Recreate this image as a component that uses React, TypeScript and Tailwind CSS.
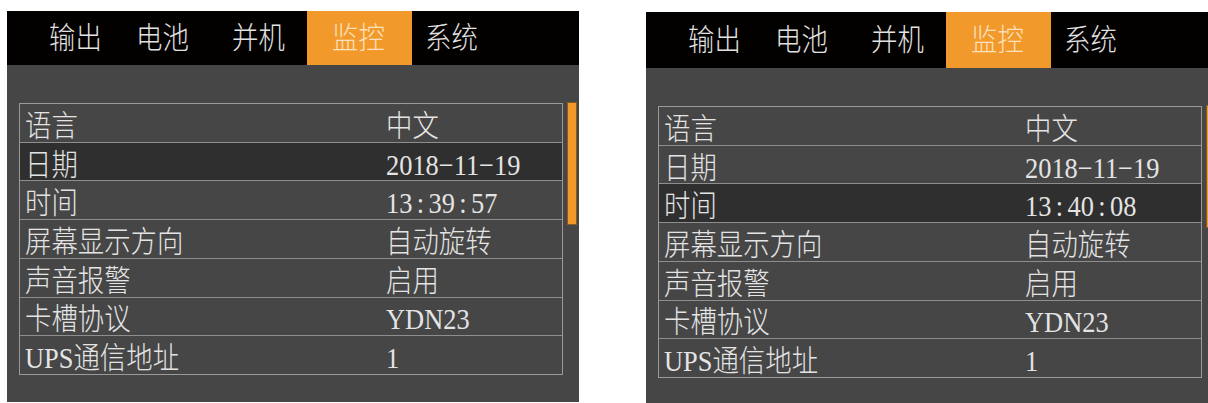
const tabs = [
  { label: '输出', cell: 'w-[87px] pl-[25px]' },
  { label: '电池', cell: 'w-[96px] pl-[25px]' },
  { label: '并机', cell: 'w-[100px] pl-[25px]' },
  { label: '监控', cell: 'w-[105px] pl-[25px]', active: true },
  { label: '系统', cell: 'w-[105px] pl-[13px]' },
];

type Row = { label: string; value: string };

// the device font is tall and narrow
function Txt({ children }: { children: React.ReactNode }) {
  return <span className="inline-block origin-left scale-x-[0.88] whitespace-nowrap">{children}</span>;
}

function Value({ v }: { v: string }) {
  if (/^\d+:\d+:\d+$/.test(v)) {
    const [h, m, s] = v.split(':');
    return (
      <Txt>
        {h}
        <span className="mx-[5px]">:</span>
        {m}
        <span className="mx-[5px]">:</span>
        {s}
      </Txt>
    );
  }
  return <Txt>{v.replace(/-/g, '−')}</Txt>;
}

function Panel({ rows, selected, shift }: { rows: Row[]; selected: number; shift?: boolean }) {
  return (
    <div className={`w-[572px] h-[391px] shrink-0 bg-[#464646] flex flex-col ${shift ? 'mt-[12px]' : 'mt-[11px]'}`}>
      {/* Tab bar */}
      <div className={`flex bg-[#030000] pl-[17px] ${shift ? 'h-[56px]' : 'h-[54px]'}`}>
        {tabs.map((t) => (
          <div
            key={t.label}
            className={`${t.cell} h-full flex items-center text-[30px] leading-none font-light ${
              t.active ? 'bg-[#f2992c] text-[#fbe0bd]' : 'text-[#e2e2e2]'
            }`}
          >
            <Txt>{t.label}</Txt>
          </div>
        ))}
      </div>

      {/* List + scrollbar */}
      <div className="flex items-start pl-[12px] pt-[38px]">
        <div className="w-[544px] h-[272px] border border-[#9a9a9a] flex flex-col">
          {rows.map((r, i) => (
            <div
              key={r.label}
              className={`flex-1 min-h-0 flex items-center pt-[6px] text-[30px] leading-[20px] font-light text-[#e4e4e4] ${
                i > 0 ? 'border-t border-[#8e8e8e]' : ''
              } ${i === selected ? 'bg-[#2f2f2f]' : ''}`}
            >
              <div className="w-[366px] pl-[5px]">
                <Txt>{r.label}</Txt>
              </div>
              <div>
                <Value v={r.value} />
              </div>
            </div>
          ))}
        </div>
        <div className="ml-[4px] -mt-[1px] w-[10px] h-[123px] bg-[#f2992c] border border-[#8a5a22]" />
      </div>
    </div>
  );
}

export default function App() {
  const base: Row[] = [
    { label: '语言', value: '中文' },
    { label: '日期', value: '2018-11-19' },
    { label: '时间', value: '13:39:57' },
    { label: '屏幕显示方向', value: '自动旋转' },
    { label: '声音报警', value: '启用' },
    { label: '卡槽协议', value: 'YDN23' },
    { label: 'UPS通信地址', value: '1' },
  ];
  const later = base.map((r) => (r.label === '时间' ? { ...r, value: '13:40:08' } : r));

  return (
    <div
      className="w-[1208px] h-[403px] overflow-hidden bg-white flex pl-[7px] gap-[67px]"
      style={{ fontFamily: '"Liberation Serif", "Noto Sans CJK SC", serif' }}
    >
      <Panel rows={base} selected={1} />
      <Panel rows={later} selected={2} shift />
    </div>
  );
}
